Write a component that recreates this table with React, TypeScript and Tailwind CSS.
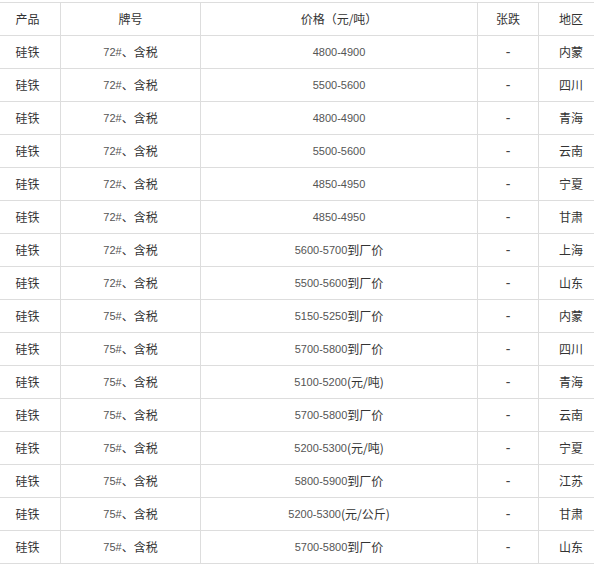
type Row = {
  product: string;
  grade: string;
  price: string;
  unit?: string;
  change: string;
  region: string;
};

const rows: Row[] = [
  { product: "硅铁", grade: "72#", price: "4800-4900", change: "-", region: "内蒙" },
  { product: "硅铁", grade: "72#", price: "5500-5600", change: "-", region: "四川" },
  { product: "硅铁", grade: "72#", price: "4800-4900", change: "-", region: "青海" },
  { product: "硅铁", grade: "72#", price: "5500-5600", change: "-", region: "云南" },
  { product: "硅铁", grade: "72#", price: "4850-4950", change: "-", region: "宁夏" },
  { product: "硅铁", grade: "72#", price: "4850-4950", change: "-", region: "甘肃" },
  { product: "硅铁", grade: "72#", price: "5600-5700", unit: "到厂价", change: "-", region: "上海" },
  { product: "硅铁", grade: "72#", price: "5500-5600", unit: "到厂价", change: "-", region: "山东" },
  { product: "硅铁", grade: "75#", price: "5150-5250", unit: "到厂价", change: "-", region: "内蒙" },
  { product: "硅铁", grade: "75#", price: "5700-5800", unit: "到厂价", change: "-", region: "四川" },
  { product: "硅铁", grade: "75#", price: "5100-5200", unit: "(元/吨)", change: "-", region: "青海" },
  { product: "硅铁", grade: "75#", price: "5700-5800", unit: "到厂价", change: "-", region: "云南" },
  { product: "硅铁", grade: "75#", price: "5200-5300", unit: "(元/吨)", change: "-", region: "宁夏" },
  { product: "硅铁", grade: "75#", price: "5800-5900", unit: "到厂价", change: "-", region: "江苏" },
  { product: "硅铁", grade: "75#", price: "5200-5300", unit: "(元/公斤)", change: "-", region: "甘肃" },
  { product: "硅铁", grade: "75#", price: "5700-5800", unit: "到厂价", change: "-", region: "山东" },
];

const cjk = "font-['Noto_Sans_CJK_SC',sans-serif] text-[12px] text-[#333]";
const num = "font-['Liberation_Sans','Noto_Sans_CJK_SC',sans-serif] text-[11px] text-[#555]";

const cell = "flex items-center justify-center border-r border-[#ddd] h-full";

export default function App() {
  return (
    <div className="w-full overflow-hidden bg-white min-h-[568px]">
      <div className="ml-[-5px] mt-[2px] w-[608px] border-t border-[#ddd]">
        <div className={`flex h-[33px] border-b border-[#ddd] ${cjk}`}>
          <div className={`${cell} w-[66px]`}>产品</div>
          <div className={`${cell} w-[140px]`}>牌号</div>
          <div className={`${cell} w-[277px]`}>价格（元/吨）</div>
          <div className={`${cell} w-[61px]`}>张跌</div>
          <div className="flex flex-1 items-center justify-center h-full">地区</div>
        </div>
        {rows.map((r, i) => (
          <div key={i} className="flex h-[33px] border-b border-[#ddd]">
            <div className={`${cell} w-[66px] ${cjk}`}>{r.product}</div>
            <div className={`${cell} w-[140px]`}>
              <span className={num}>{r.grade}</span>
              <span className={cjk}>、含税</span>
            </div>
            <div className={`${cell} w-[277px]`}>
              <span className={num}>{r.price}</span>
              {r.unit && <span className={cjk}>{r.unit}</span>}
            </div>
            <div className={`${cell} w-[61px] font-['Liberation_Sans',sans-serif] text-[14px] text-[#444]`}>
              {r.change}
            </div>
            <div className={`flex flex-1 items-center justify-center h-full ${cjk}`}>{r.region}</div>
          </div>
        ))}
      </div>
    </div>
  );
}
